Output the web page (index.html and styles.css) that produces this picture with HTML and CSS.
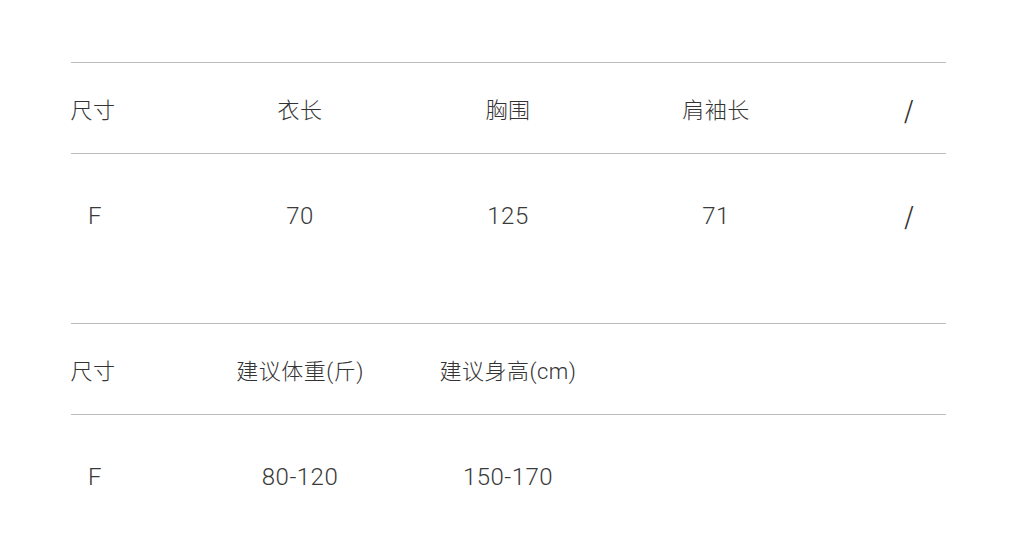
FILE: index.html
```html
<!DOCTYPE html>
<html lang="zh-CN">
<head>
<meta charset="utf-8">
<title>尺码表</title>
<link rel="stylesheet" href="styles.css">
</head>
<body>
<main class="page">
  <section class="size-table">
    <div class="row head cols-5">
      <div class="cell">尺寸</div>
      <div class="cell">衣长</div>
      <div class="cell">胸围</div>
      <div class="cell">肩袖长</div>
      <div class="cell slash">/</div>
    </div>
    <div class="row data cols-5">
      <div class="cell num first">F</div>
      <div class="cell num">70</div>
      <div class="cell num">125</div>
      <div class="cell num">71</div>
      <div class="cell slash">/</div>
    </div>
  </section>
  <section class="size-table">
    <div class="row head cols-3">
      <div class="cell">尺寸</div>
      <div class="cell">建议体重(斤)</div>
      <div class="cell">建议身高(cm)</div>
    </div>
    <div class="row data cols-3">
      <div class="cell num first">F</div>
      <div class="cell num">80-120</div>
      <div class="cell num">150-170</div>
    </div>
  </section>
</main>
</body>
</html>
```

FILE: styles.css
```css
html, body {
  margin: 0;
  padding: 0;
  background: #ffffff;
}

body {
  font-family: "Roboto", "Noto Sans CJK SC", sans-serif;
  color: #333333;
}

.page {
  padding: 62px 0 0 71px;
}

.size-table {
  width: 875px;
  border-top: 1px solid #bcbcbc;
}

.size-table + .size-table {
  margin-top: 45px;
}

.row {
  display: grid;
  column-gap: 162px;
  align-items: center;
  justify-items: center;
}

.cols-5 {
  grid-template-columns: 44px 46px 46px 46px 16px;
}

.cols-3 {
  grid-template-columns: 44px 46px 46px;
}

.head {
  height: 90px;
  border-bottom: 1px solid #bcbcbc;
  font-size: 22px;
  font-weight: 300;
  letter-spacing: 0.5px;
}

.data {
  height: 124px;
  font-size: 22px;
}

.cell {
  white-space: nowrap;
  justify-self: center;
}

.num {
  font-size: 24px;
  font-weight: 300;
  color: #3a3a3a;
  letter-spacing: 0.5px;
}

.first {
  padding-left: 4px;
}

.slash {
  font-family: "Noto Sans CJK SC", sans-serif;
  font-size: 24px;
  font-weight: 400;
  color: #333333;
}

.data .slash {
  margin-bottom: 4px;
}
```
